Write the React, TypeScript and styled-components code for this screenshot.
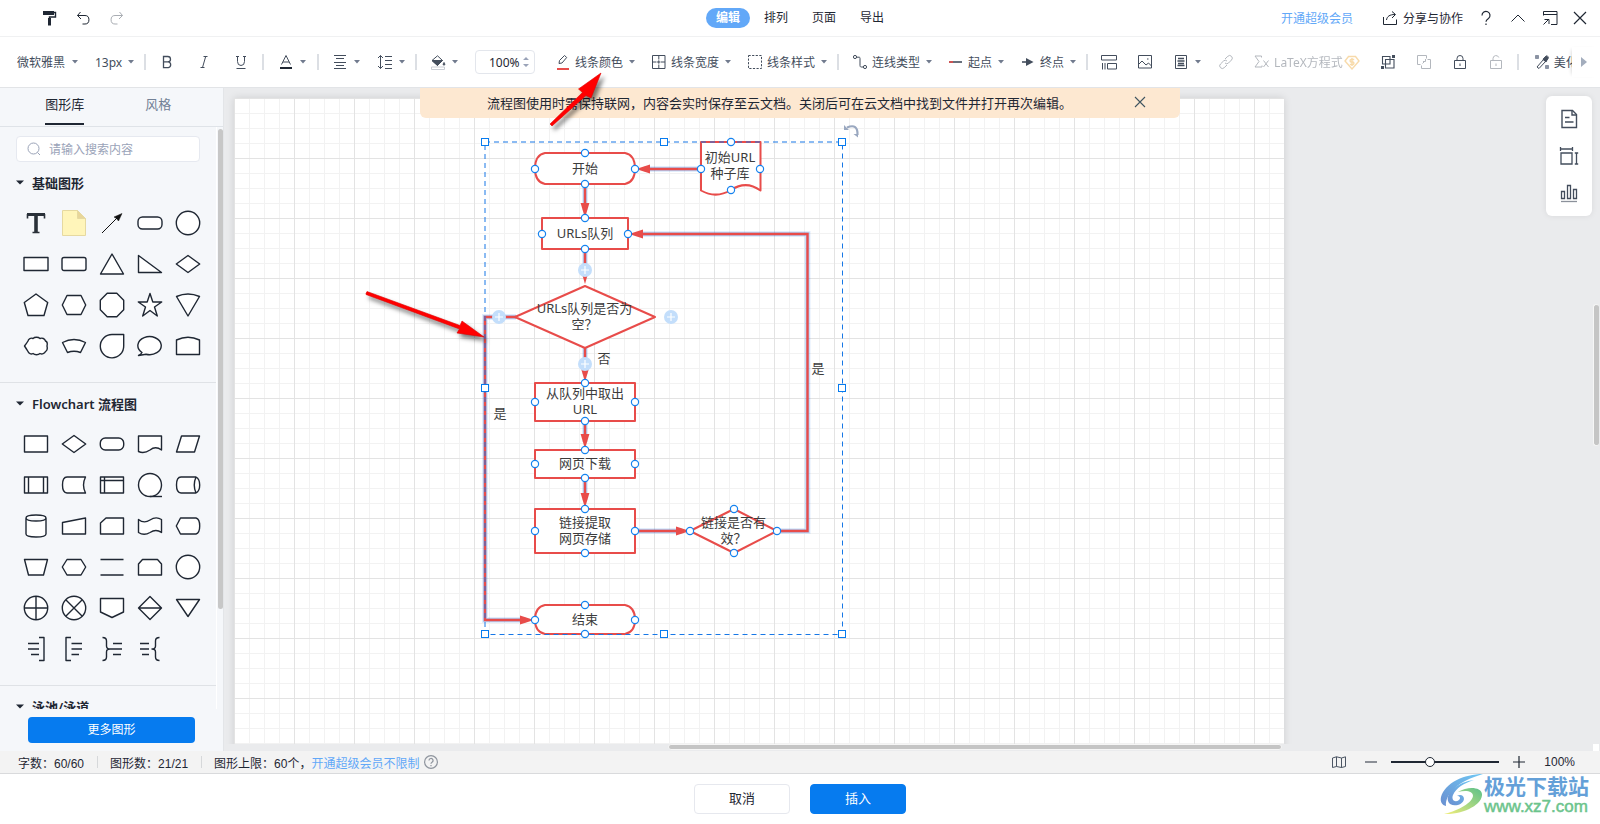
import React from "react";
import styled, { createGlobalStyle, css } from "styled-components";

const UI_FONT = `"Noto Sans", "Noto Sans CJK SC", sans-serif`;
const NUM_FONT = `"Liberation Sans", "Noto Sans CJK SC", sans-serif`;
const INK = "#1f2733";
const TOOL = "#434d5c";
const BLUE = "#067bef";
const RED = "#e84c4a";

const GlobalStyle = createGlobalStyle`
  * { box-sizing: border-box; }
  body { margin: 0; background: #fff; color: ${INK}; font-family: ${UI_FONT}; font-size: 12px; }
  button, input, select { font: inherit; color: inherit; margin: 0; }
  button { background: none; border: 0; padding: 0; cursor: pointer; white-space: nowrap; }
  a { color: #62a8f8; text-decoration: none; }
  svg { display: block; flex: none; }
`;

/* ---------- frame ---------- */

const Shell = styled.div`
  position: relative;
  display: flex;
  flex-direction: column;
  height: 100vh;
  overflow: hidden;
`;

const TopBar = styled.header`
  display: grid;
  grid-template-columns: 1fr auto 1fr;
  align-items: center;
  flex: none;
  height: 37px;
  border-bottom: 1px solid #f0f1f2;
`;

const HistoryTools = styled.div`
  display: flex;
  gap: 14px;
  padding-left: 39px;
`;

const Menu = styled.nav`
  display: flex;
  gap: 4px;
`;

const MenuItem = styled.button<{ $active?: boolean }>`
  width: 44px;
  height: 20px;
  border-radius: 10px;
  line-height: 18px;
  ${(p) =>
    p.$active &&
    css`
      background: #62a8f8;
      color: #fff;
      font-weight: 700;
    `}
`;

const Account = styled.div`
  display: flex;
  align-items: center;
  justify-content: flex-end;
  padding-right: 12px;
  gap: 12px;
`;

const ShareButton = styled.button`
  display: flex;
  align-items: center;
  gap: 5px;
  margin: 0 1px 0 17px;
`;

const IconButton = styled.button<{ $w?: number }>`
  display: flex;
  align-items: center;
  justify-content: center;
  width: ${(p) => p.$w ?? 20}px;
  height: 24px;
`;

/* ---------- tool bar ---------- */

const ToolBar = styled.div`
  display: flex;
  flex: none;
  height: 51px;
  border-bottom: 1px solid #e2e4e7;
  color: ${TOOL};
`;

const ToolStrip = styled.div`
  display: flex;
  align-items: center;
  flex: 1;
  min-width: 0;
  overflow: hidden;
  padding-left: 8px;
`;

const ToolGroup = styled.div<{ $gap?: number; $pad?: number }>`
  display: flex;
  align-items: center;
  flex: none;
  gap: ${(p) => p.$gap ?? 12}px;
  padding: 0 ${(p) => p.$pad ?? 9}px;
`;

const Divider = styled.span`
  flex: none;
  width: 2px;
  height: 16px;
  background: #dcdfe4;
`;

const Tool = styled.button<{ $off?: boolean }>`
  display: flex;
  align-items: center;
  flex: none;
  height: 24px;
  opacity: ${(p) => (p.$off ? 0.4 : 1)};
`;

const ToolIcon = styled.span`
  display: flex;
  align-items: center;
  justify-content: center;
  width: 24px;
`;

const MemberBadge = styled.span`
  margin: 0 4px 0 1px;
`;

const CaretBox = styled.span<{ $gap: number }>`
  display: flex;
  justify-content: center;
  width: 8px;
  margin-left: ${(p) => p.$gap}px;
`;

const Picker = styled.label`
  display: flex;
  align-items: center;
`;

const PickerSelect = styled.select<{ $w: number }>`
  appearance: none;
  width: ${(p) => p.$w}px;
  height: 24px;
  padding: 0;
  border: 0;
  background: none;
  outline: 0;
`;

const ZoomBox = styled.label`
  display: flex;
  align-items: center;
  width: 60px;
  height: 24px;
  margin: 0 5px;
  padding: 0 5px 0 13px;
  border: 1px solid #e3e6ec;
  border-radius: 4px;
  color: ${INK};
`;

const ZoomInput = styled.input`
  flex: 1;
  min-width: 0;
  padding: 0;
  border: 0;
  outline: 0;
`;

const ScrollTools = styled.button`
  display: flex;
  align-items: center;
  justify-content: center;
  flex: none;
  width: 28px;
  margin: 10px 0;
  padding-right: 4px;
  box-shadow: -3px 0 4px -3px rgba(0, 0, 0, 0.2);
`;

/* ---------- main area ---------- */

const Main = styled.main`
  position: relative;
  display: flex;
  flex: 1;
  min-height: 0;
`;

const SideBar = styled.aside`
  display: flex;
  flex-direction: column;
  flex: none;
  width: 224px;
  background: #f5f7fa;
  border-right: 1px solid #e3e5e8;
`;

const Tabs = styled.div`
  display: grid;
  grid-template-columns: 1fr 1fr;
  justify-items: center;
  height: 39px;
  padding: 0 18px;
  border-bottom: 1px solid #dfe3e8;
`;

const Tab = styled.button<{ $active?: boolean }>`
  height: 37px;
  padding-bottom: 5px;
  border-bottom: 2px solid ${(p) => (p.$active ? INK : "transparent")};
  color: ${(p) => (p.$active ? INK : "#728196")};
  font-size: 13px;
`;

const LibraryScroll = styled.div`
  display: flex;
  flex: 1;
  min-height: 0;
`;

const Library = styled.div`
  flex: 1;
  min-width: 0;
  overflow: hidden;
`;

const LibraryTrack = styled.div`
  width: 7px;
  padding: 2px 1px;
  border-left: 1px solid #fff;
`;

const LibraryThumb = styled.div`
  width: 5px;
  height: 83%;
  border-radius: 3px;
  background: #c7c7c7;
`;

const SearchBox = styled.label`
  display: flex;
  align-items: center;
  gap: 8px;
  height: 26px;
  margin: 9px 16px 0;
  padding: 0 10px;
  border: 1px solid #e6e9f0;
  border-radius: 4px;
  background: #fff;
`;

const SearchInput = styled.input`
  flex: 1;
  min-width: 0;
  padding: 0;
  border: 0;
  outline: 0;
  &::placeholder {
    color: #9aa3b8;
  }
`;

const Section = styled.section`
  padding: 10px 0 16px;
  border-bottom: 1px solid #dfe2e6;
`;

const SectionTitle = styled.button`
  display: flex;
  align-items: center;
  gap: 8px;
  height: 20px;
  margin-bottom: 10px;
  padding-left: 16px;
  font-size: 13px;
  font-weight: 600;
`;

const ShapeGrid = styled.div`
  display: grid;
  grid-template-columns: repeat(5, 38px);
  grid-auto-rows: 41px;
  padding-left: 17px;
`;

const ShapeButton = styled.button`
  display: flex;
  align-items: center;
  justify-content: center;
`;

const SideFooter = styled.div`
  padding: 8px 28px;
`;

const MoreButton = styled.button`
  width: 100%;
  height: 26px;
  padding-bottom: 2px;
  border-radius: 4px;
  background: ${BLUE};
  color: #fff;
`;

const Workspace = styled.div`
  position: relative;
  flex: 1;
  min-width: 0;
  padding-bottom: 7px;
  background: #eaebed;
`;

const Viewport = styled.div`
  height: 100%;
  overflow: hidden;
  padding: 10px 0 0 10px;
`;

const Paper = styled.div`
  position: relative;
  width: 1050px;
  height: 900px;
  background-color: #fff;
  background-image: linear-gradient(90deg, #e3e3e3 1px, transparent 1px),
    linear-gradient(#e3e3e3 1px, transparent 1px),
    linear-gradient(90deg, #f2f2f2 1px, transparent 1px),
    linear-gradient(#f2f2f2 1px, transparent 1px);
  background-size: 60px 60px, 60px 60px, 15px 15px, 15px 15px;
  box-shadow: 0 0 8px rgba(0, 0, 0, 0.12);
`;

const DiagramLines = styled.svg`
  position: absolute;
  inset: 0;
`;

const NodeText = styled.div<{ $x: number; $y: number; $w: number; $h: number }>`
  position: absolute;
  left: ${(p) => p.$x}px;
  top: ${(p) => p.$y}px;
  width: ${(p) => p.$w}px;
  height: ${(p) => p.$h}px;
  display: flex;
  align-items: center;
  justify-content: center;
  padding-bottom: 2px;
  text-align: center;
  white-space: pre;
  font-size: 13px;
  line-height: 16px;
  color: #3c3c3c;
`;

const CanvasThumbX = styled.div`
  position: absolute;
  left: 32.3%;
  bottom: 1px;
  width: 44.6%;
  height: 6px;
  border-radius: 3px;
  border: 1px solid #f6f6f6;
  background: #c5c5c5;
`;

const CanvasThumbY = styled.div`
  position: absolute;
  right: 1px;
  top: 216px;
  width: 6px;
  height: 142px;
  border-radius: 3px;
  border: 1px solid #f6f6f6;
  border-right-width: 0;
  background: #c5c5c5;
`;

const ScrollCorner = styled.div`
  position: absolute;
  right: 1px;
  bottom: 0;
  width: 6px;
  height: 7px;
  background: #fff;
`;

const Notice = styled.div`
  position: absolute;
  top: 0;
  left: 50%;
  transform: translateX(-50%);
  display: flex;
  align-items: center;
  justify-content: space-between;
  width: 760px;
  height: 30px;
  padding: 0 30px 2px 67px;
  border-radius: 0 0 6px 6px;
  background: #fde8d1;
  font-size: 13px;
  white-space: nowrap;
`;

const SidePanel = styled.div`
  position: absolute;
  top: 8px;
  right: 8px;
  display: flex;
  flex-direction: column;
  align-items: center;
  gap: 13px;
  width: 46px;
  height: 120px;
  padding-top: 11px;
  border-radius: 6px;
  background: #fff;
  box-shadow: 0 0 6px rgba(0, 0, 0, 0.08);
`;

const Pointer = styled.svg<{ $x: number; $y: number }>`
  position: absolute;
  left: ${(p) => p.$x}px;
  top: ${(p) => p.$y}px;
  pointer-events: none;
  filter: drop-shadow(3px 4px 2px rgba(0, 0, 0, 0.5));
  overflow: visible;
`;

/* ---------- status bar and footer ---------- */

const StatusBar = styled.div`
  display: flex;
  align-items: center;
  flex: none;
  height: 23px;
  padding: 0 25px 0 18px;
  border-bottom: 1px solid #d9dadc;
  background: #f3f3f3;
  font-family: ${NUM_FONT};
`;

const StatusDivider = styled.span`
  width: 1px;
  height: 12px;
  margin: 0 12px 0 13px;
  background: #d6d8da;
`;

const HelpButton = styled.button`
  margin-left: 5px;
`;

const ZoomControls = styled.div`
  display: flex;
  align-items: center;
  margin-left: auto;
  gap: 10px;
`;

const ZoomSlider = styled.input`
  appearance: none;
  width: 108px;
  height: 12px;
  background: linear-gradient(${INK}, ${INK}) center / 100% 2px no-repeat;
  &::-webkit-slider-thumb {
    appearance: none;
    width: 10px;
    height: 10px;
    border: 1px solid ${INK};
    border-radius: 50%;
    background: #fff;
  }
`;

const ZoomValue = styled.span`
  margin-left: 5px;
`;

const Footer = styled.footer`
  position: relative;
  display: flex;
  justify-content: center;
  flex: none;
  gap: 20px;
  padding: 10px 0;
`;

const DialogButton = styled.button<{ $primary?: boolean }>`
  width: 96px;
  height: 30px;
  padding-bottom: 4px;
  border: 1px solid ${(p) => (p.$primary ? BLUE : "#e6e8ee")};
  border-radius: 4px;
  background: ${(p) => (p.$primary ? BLUE : "#fff")};
  color: ${(p) => (p.$primary ? "#fff" : INK)};
  font-size: 13px;
`;

const SiteMark = styled.div`
  position: absolute;
  right: 11px;
  top: 0;
  display: flex;
`;

const SiteName = styled.div`
  display: flex;
  flex-direction: column;
  color: #64a0d8;
  font-size: 21px;
  font-weight: 700;
  line-height: 24px;
`;

const SiteUrl = styled.span`
  color: #6cc48c;
  font-family: "Liberation Sans", sans-serif;
  font-size: 17px;
  font-weight: 400;
  line-height: 18px;
  -webkit-text-stroke: 0.5px #6cc48c;
`;

/* ---------- icons ---------- */

type SvgProps = { w?: number; h?: number; sw?: number; color?: string; children: React.ReactNode };

const Glyph = ({ w = 16, h, sw = 1, color = "currentColor", children }: SvgProps) => (
  <svg width={w} height={h ?? w} viewBox={`0 0 ${w} ${h ?? w}`} fill="none" stroke={color} strokeWidth={sw} aria-hidden="true">
    {children}
  </svg>
);

const Caret = ({ gap = 1 }: { gap?: number }) => (
  <CaretBox $gap={gap}>
    <svg width="6" height="4" viewBox="0 0 6 4" aria-hidden="true">
      <path d="M0 0h6L3 3.4z" fill="#717b8e" />
    </svg>
  </CaretBox>
);

const icons = {
  painter: (
    <Glyph>
      <path d="M2 1h11v4H2z" fill={INK} stroke="none" />
      <path d="M13 2.500h1.500V7H8.500v3" stroke={INK} strokeWidth="1.400" />
      <path d="M7 8h3v7.500H7z" fill={INK} stroke="none" />
    </Glyph>
  ),
  undo: (
    <Glyph>
      <path d="M5.500 2L2.500 5.500L6 9M2.500 5.500H10a3.700 4 0 0 1 0 8.500H7.500" />
    </Glyph>
  ),
  redo: (
    <Glyph color="#a9adb3">
      <path d="M10.500 2l3 3.500L10 9M13.500 5.500H6a3.700 4 0 0 0 0 8.500h2.500" />
    </Glyph>
  ),
  share: (
    <Glyph color={INK}>
      <path d="M1.500 7v7.500h13V9.500M4.500 10C5 6.500 7.500 4.500 13 4.500M10 1.500l3.500 3L10 8" />
    </Glyph>
  ),
  help: (
    <Glyph color={INK} sw={1.2}>
      <path d="M4 5.500a4 4 0 1 1 6.500 3C9 9.500 8 10 8 11.800" />
      <path d="M8 13.500v1.500" />
    </Glyph>
  ),
  up: (
    <Glyph color={INK}>
      <path d="M1.500 11.500L8 5l6.500 6.500" />
    </Glyph>
  ),
  popout: (
    <Glyph color={INK}>
      <path d="M1.500 5.500V1.500h13.500v13H9M1.500 4.500h13.500M1.500 14.500l5-5M2.500 9.500h4.500v4.500" />
    </Glyph>
  ),
  close: (
    <Glyph color={INK} sw={1.2}>
      <path d="M2 2l12 12M14 2L2 14" />
    </Glyph>
  ),
  bold: (
    <Glyph sw={1.3}>
      <path d="M4.500 2.500h4.200a2.800 2.700 0 0 1 0 5.400H4.500zM4.500 7.900h4.900a2.800 2.900 0 0 1 0 5.700H4.500z" />
    </Glyph>
  ),
  italic: (
    <Glyph>
      <path d="M7.500 2.500h4M4.500 13.500h4M9.700 2.500L6.500 13.500" />
    </Glyph>
  ),
  underline: (
    <Glyph>
      <path d="M4.500 2v5.500a3.500 4 0 0 0 7 0V2M3 2.500h3M10 2.500h3M3.500 14.500h9" />
    </Glyph>
  ),
  fontColor: (
    <Glyph>
      <path d="M3.500 10.500L8 1.500l4.500 9M5 8h6" />
      <path d="M2 14h12" stroke={INK} strokeWidth="2" />
    </Glyph>
  ),
  align: (
    <Glyph>
      <path d="M2 1.500h12M4 4.500h8M2 8.500h12M4 11.500h8M2 14.500h12" />
    </Glyph>
  ),
  lineHeight: (
    <Glyph>
      <path d="M3.500 1.500v13M1 4l2.500-2.500L6 4M1 12l2.500 2.500L6 12M8 2.500h7M8 6.500h7M8 10.500h7M8 14.500h7" />
    </Glyph>
  ),
  fill: (
    <Glyph>
      <path d="M2 6.500L7.500 1.800l5 4.700-5 5z" />
      <path d="M2 6.500h10.500l-5 5zM14 8.500c1 1.500 1.200 2.500 0 2.700-1.200-.2-1-1.200 0-2.700z" fill="currentColor" />
      <path d="M1.500 13h13v2.500h-13z" stroke="#c9cdd4" strokeWidth="1" />
    </Glyph>
  ),
  lineColor: (
    <Glyph>
      <path d="M4 9.500l.5-3L9.500 1.500l2.200 2L7 9z" />
      <path d="M2 15h12" stroke={RED} strokeWidth="2" />
    </Glyph>
  ),
  lineWidth: (
    <Glyph>
      <path d="M1.500 1.500h12.500v13H1.500z" />
      <path d="M1.500 8h4M10 8h4M7.800 1.500v4M7.800 10.500v4" />
      <path d="M6 8h3.500M7.800 6.300v3.400" />
    </Glyph>
  ),
  lineStyle: (
    <Glyph>
      <path d="M1.500 1.500h13v13h-13z" strokeDasharray="2.200 1.400" />
    </Glyph>
  ),
  connector: (
    <Glyph>
      <circle cx="3" cy="3" r="1.600" />
      <circle cx="13" cy="13" r="1.600" />
      <path d="M4.600 3.200H7c1 0 1 .5 1 1.500v6.500c0 1 .2 1.800 1.200 1.800h2.200" />
    </Glyph>
  ),
  lineStart: (
    <Glyph>
      <path d="M1 8h13" strokeWidth="1.600" />
      <path d="M1 8h4" stroke={RED} strokeWidth="1.600" />
    </Glyph>
  ),
  lineEnd: (
    <Glyph>
      <path d="M2 8h5" strokeWidth="1.600" />
      <path d="M6 4l7.500 4L6 12z" fill="currentColor" stroke="none" />
    </Glyph>
  ),
  layout: (
    <Glyph>
      <path d="M.5 1.500h15v4.500H.5zM6.500 9.500h9v5.500H6.500zM1.500 9v6.500M4 9v6.500" />
    </Glyph>
  ),
  image: (
    <Glyph>
      <path d="M1.500 1.500h13v12.500h-13z" />
      <path d="M1.500 10.500l3.500-3.500 4 4 2.500-2 3 3M10 5h1.500" />
    </Glyph>
  ),
  document: (
    <Glyph>
      <path d="M2.500 1.500h11v13h-11z" />
      <path d="M5 4.500h6M4.500 7h7M5 9.500h6M4.500 11.500h7" strokeWidth="1.400" />
    </Glyph>
  ),
  link: (
    <Glyph>
      <path d="M7 5l2.800-2.700a2.500 2.500 0 0 1 3.700 3.700L10.500 9a2.500 2.500 0 0 1-3.500 0M9 11l-2.800 2.700a2.500 2.500 0 0 1-3.700-3.700L5.500 7A2.500 2.500 0 0 1 9 7" />
    </Glyph>
  ),
  sigma: (
    <Glyph>
      <path d="M7.500 3.500V2H1l4 5.500L1 13h7v-1.500M9.500 6.500l5 6.500M14.500 6.500l-5 6.500" />
    </Glyph>
  ),
  coin: (
    <Glyph sw={1.4} color="#eda52c">
      <path d="M4.500 2.500h7L15 7 8 15 1 7z" />
      <path d="M10.200 5.500H7a1.300 1.300 0 0 0 0 2.500h2a1.300 1.300 0 0 1 0 2.500H5.800M8 4v8" />
    </Glyph>
  ),
  group: (
    <Glyph sw={1.1}>
      <path d="M2.500 2.500h7.500v7.500H2.500zM5.500 5.500h8.500v8.500H5.500z" />
      <path d="M12 1h3v3h-3zM1 12h3v3H1z" fill="currentColor" stroke="none" />
    </Glyph>
  ),
  ungroup: (
    <Glyph>
      <path d="M4.500 10.500H1.500V1.500h9v3M11.500 5.500h3v9H5.500v-3M6.500 9.500l3-3M9.500 5v2.500H7" />
    </Glyph>
  ),
  lock: (
    <Glyph>
      <path d="M2.500 6.500h11v8h-11zM5 6.500V4.500a3 3 0 0 1 6 0v2M8 9.500v2.500" />
    </Glyph>
  ),
  unlock: (
    <Glyph>
      <path d="M2.500 6.500h11v8h-11zM5 6.500V4.500a3 3 0 0 1 5.800-1M8 9.500v2.500" />
    </Glyph>
  ),
  beautify: (
    <Glyph>
      <path d="M3 13L9.500 5.500l2 2L5 14.500zM9.500 5l2-2.500a1.600 1.600 0 0 1 2.500 2L12 7z" />
      <path d="M9 5.500l3 2.500 2-4-2-1.800z" fill="currentColor" />
      <path d="M1.500 1.500h3v3h-3zM11.500 11.500h3v3h-3z" fill="#8b93a3" stroke="#8b93a3" />
    </Glyph>
  ),
  search: (
    <Glyph w={14} color="#9aa3b8">
      <circle cx="6.500" cy="6.500" r="5.500" />
      <path d="M10.500 10.500l2.500 2.500" />
    </Glyph>
  ),
  page: (
    <Glyph w={20} sw={1.4} color={TOOL}>
      <path d="M3 1.500h10.500L17.500 5.500v13H3z" />
      <path d="M13 1.500v4.500h4.500" />
      <path d="M6 8.500h4.500M6 13h8.500" />
    </Glyph>
  ),
  measure: (
    <Glyph w={20} sw={1.3} color={TOOL}>
      <path d="M2 7h11v11H2zM1.500 3h12M1.500 1v4M13.500 1v4M17.500 7v11M15.800 7h3.400M15.800 18h3.400" />
    </Glyph>
  ),
  chart: (
    <Glyph w={20} sw={1.3} color={TOOL}>
      <path d="M2.500 8.500h3v7h-3zM8.500 2.500h3v13h-3zM14.500 6.500h3v9h-3z" />
      <path d="M2 18.500h16" stroke="#8b919b" />
    </Glyph>
  ),
  map: (
    <Glyph w={14} h={12} color="#4b5563">
      <path d="M.5 2L4.500.800v9.700L.500 11.500zM4.500.800l5 1.200v9.500l-5-1M9.500 2l4-1.200v9.700l-4 1z" />
    </Glyph>
  ),
  minus: (
    <Glyph w={14} color="#8b8f96" sw={2}>
      <path d="M1 7h12" />
    </Glyph>
  ),
  plus: (
    <Glyph w={14} color={INK} sw={1.2}>
      <path d="M1 7h12M7 1v12" />
    </Glyph>
  ),
  question: (
    <Glyph w={14} color="#8f959e" sw={1.2}>
      <circle cx="7" cy="7" r="6.400" />
      <path d="M5 5.500a2 2 0 1 1 3 1.700c-.7.400-1 .800-1 1.500M7 10v1.200" />
    </Glyph>
  ),
};

/* ---------- shape library ---------- */

type Shape = { name: string; body: React.ReactNode };
const p = (name: string, d: string): Shape => ({ name, body: <path d={d} /> });

const basicShapes: Shape[] = [
  { name: "文本", body: <g fill="none" stroke="#2a3139"><path d="M4 4.500h18" strokeWidth="3" /><path d="M13 4v18" strokeWidth="3.600" /><path d="M9.500 22.500h7M4.500 4v4.500M21.500 4v4.500" strokeWidth="1.600" /></g> },
  { name: "便签", body: <g stroke="#e6d9a0" strokeWidth="1"><path d="M1.500 .5H16.500L24.500 8.500V25.500H1.500z" fill="#fff5ba" /><path d="M16.500 .5V8.500H24.500z" fill="#e8d69a" /></g> },
  { name: "箭头", body: <g stroke="#111" strokeWidth="1"><path d="M3 23L18 8" /><path d="M23 3.500L19.500 11l-2-2.500L15 7z" fill="#111" strokeWidth=".5" /></g> },
  { name: "圆角胶囊", body: <rect x="1" y="7" width="24" height="12" rx="4.500" /> },
  { name: "圆", body: <circle cx="13" cy="13" r="11.700" /> },
  { name: "矩形", body: <rect x="1" y="6.500" width="24" height="13" /> },
  { name: "圆角矩形", body: <rect x="1" y="6.500" width="24" height="13" rx="2" /> },
  p("三角形", "M13 3L24.500 23H1.500z"),
  p("直角三角形", "M1.500 4.500V21.500H24.500z"),
  p("菱形", "M13 4.500L24.700 13L13 21.500L1.300 13z"),
  p("五边形", "M13 2L24.700 10.500L21 23.500H5L1.300 10.500z"),
  p("六边形", "M6 3.500H20L24.700 13L20 22.500H6L1.300 13z"),
  p("八边形", "M8.200 1.300H17.800L24.700 8.200V17.800L17.800 24.700H8.200L1.300 17.800V8.200z"),
  p("五角星", "M13 1.500L15.800 10H24.700L17.500 15L20.300 24L13 18.500L5.700 24L8.500 15L1.300 10H10.200z"),
  p("扇形", "M1.500 4.500Q13-.5 24.500 4.500L13 24z"),
  p("云", "M5 8A3.500 3.500 0 0 1 10 5.500A4.500 3.500 0 0 1 17 5.500A4 4 0 0 1 22.500 8Q25 9 24 13Q25 17 22.500 18.500A4 4 0 0 1 17 20.500A4.500 3.500 0 0 1 10 20.500A3.500 3.500 0 0 1 5 18.500Q3.500 16 1.500 13Q3.500 10.500 5 8z"),
  p("弧形", "M1.500 9.500Q13 3.500 24.500 9.500L19.500 19.500Q13 17 6.500 19.500z"),
  p("水滴", "M13 1.500H24.700V13A11.700 11.700 0 1 1 13 1.500z"),
  p("对话", "M5 19.500A11.700 9 0 1 1 9 21.200L1.500 22.500Q4 21.500 5 19.500z"),
  p("拱形", "M1.500 21.500V7Q13 1.500 24.500 7V21.500z"),
];

const flowShapes: Shape[] = [
  p("流程", "M1.500 5H24.500V21H1.500z"),
  p("判定", "M13 4.500L24.700 13L13 21.500L1.300 13z"),
  { name: "开始结束", body: <rect x="1.300" y="7" width="23.400" height="12" rx="5" /> },
  p("文档", "M1.500 5H24.500V19Q18.500 14.500 13 19Q7 23 1.500 20.500z"),
  p("数据", "M6.500 5H24.500L19.500 21H1.500z"),
  p("子流程", "M1.500 5H24.500V21H1.500zM5.500 5V21M20.500 5V21"),
  p("外部数据", "M6 5H24.500Q20.500 13 24.500 21H6Q1.500 21 1.500 13Q1.500 5 6 5z"),
  p("内部存储", "M1.500 5H24.500V21H1.500zM5.500 5V21M1.500 8.500H24.500"),
  { name: "队列数据", body: <><circle cx="13" cy="13" r="11.500" /><path d="M13 24.500H25" /></> },
  p("条件", "M6 5H21Q24.700 7 24.700 13Q24.700 19 21 21H6Q1.500 21 1.500 13Q1.500 5 6 5zM21 5Q17.500 13 21 21"),
  p("数据库", "M3 5Q3 2 13 2T23 5V21Q23 24 13 24T3 21zM3 5Q3 8 13 8T23 5"),
  p("人工输入", "M1.500 9.500L24.500 5V21H1.500z"),
  p("卡片", "M7 5H24.500V21H1.500V10z"),
  p("条带", "M1.500 6.500Q7 11 13 7Q19 3 24.500 6.500V19.500Q19 15.500 13 19.500Q7 23 1.500 19.500z"),
  p("展示", "M5.500 5H21Q24.700 6 24.700 13Q24.700 20 21 21H5.500L1.300 13z"),
  p("人工操作", "M1.500 5.500H24.500L20.500 21H5.500z"),
  p("准备", "M6 5.500H20L24.700 13L20 21H6L1.300 13z"),
  p("并行模式", "M1.500 5.500H24.500M1.500 21H24.500"),
  p("循环限值", "M5.500 5.500H20.500L24.500 10V21H1.500V10z"),
  { name: "页面内引用", body: <circle cx="13" cy="13" r="11.700" /> },
  { name: "或者", body: <><circle cx="13" cy="13" r="11.700" /><path d="M1.300 13H24.700M13 1.300V24.700" /></> },
  { name: "总和", body: <><circle cx="13" cy="13" r="11.700" /><path d="M5 5L21 21M21 5L5 21" /></> },
  p("跨页引用", "M1.500 3.500H24.500V17L13 22.500L1.500 17z"),
  p("排序", "M13 1.500L24.500 13L13 24.500L1.500 13zM1.500 13H24.500"),
  p("合并", "M1.500 4.500H24.500L13 21.500z"),
  { name: "右注释", body: <path fill="none" d="M16 1.500H21V24.500H16M5 7.500H16M5 13H16M8 18.500H16" /> },
  { name: "左注释", body: <path fill="none" d="M10 1.500H5V24.500H10M10.500 7.500H21M10.500 13H21M10.500 18.500H18" /> },
  { name: "右括注释", body: <path fill="none" d="M3.500 1.500Q7.500 1.500 7.500 5V10Q7.500 13 11 13Q7.500 13 7.500 16V21Q7.500 24.500 3.500 24.500M14 7.500H23M11 13H23M14 18.500H22" /> },
  { name: "左括注释", body: <path fill="none" d="M22.500 1.500Q18.500 1.500 18.500 5V10Q18.500 13 15 13Q18.500 13 18.500 16V21Q18.500 24.500 22.500 24.500M3 7.500H12M3 13H12M5 18.500H12" /> },
];

const ShapeSection = ({ title, shapes }: { title: string; shapes: Shape[] }) => (
  <Section>
    <SectionTitle>
      <svg width="8" height="5" viewBox="0 0 8 5" aria-hidden="true">
        <path d="M0 .5h8L4 4.500z" fill={INK} />
      </svg>
      {title}
    </SectionTitle>
    <ShapeGrid>
      {shapes.map((s) => (
        <ShapeButton key={s.name} aria-label={s.name}>
          <svg width="26" height="26" viewBox="0 0 26 26" fill="#fff" stroke={INK} strokeWidth="1.400" strokeLinejoin="round">
            {s.body}
          </svg>
        </ShapeButton>
      ))}
    </ShapeGrid>
  </Section>
);

/* ---------- diagram ---------- */

const connectors = [
  "M467 71H410",
  "M351 86V112",
  "M351 151V176",
  "M351 250V276",
  "M351 323V344",
  "M351 380V402",
  "M401 433H448",
  "M543 433H573.500V136H404",
  "M282 219H251V522H292",
];

const arrowHeads = [
  "M402 71l14-4.400v8.800z",
  "M351 120l-4.400-15h8.800z",
  "M351 186l-4.400-15h8.800z",
  "M351 284l-4.400-15h8.800z",
  "M351 351l-4.400-15h8.800z",
  "M351 410l-4.400-15h8.800z",
  "M456 433l-14-4.400v8.800z",
  "M395 136l14-4.400v8.800z",
  "M300 522l-14-4.400v8.800z",
];

const outlines = [
  "M311 55H391Q401 57 401 70.500Q401 84 391 86H311Q301 84 301 70.500Q301 57 311 55z",
  "M467 44H526.500V92.500Q512 82 497 92Q482 101 467 92.500z",
  "M308 120H394V151H308z",
  "M351 188L421 219L351 250L281 219z",
  "M301 285H401V323H301z",
  "M301 352H401V380H301z",
  "M301 411H401V455H301z",
  "M500 411L543 433L500 455L456 433z",
  "M311 507H391Q401 509 401 521.500Q401 534 391 536H311Q301 534 301 521.500Q301 509 311 507z",
];

const ports: [number, number][] = [
  [351, 55], [351, 86], [301, 71], [401, 71],
  [497, 44], [467, 71], [526, 71], [497, 92],
  [351, 120], [351, 151], [308, 136], [394, 136],
  [351, 285], [351, 323], [301, 304], [401, 304],
  [351, 352], [351, 380], [301, 366], [401, 366],
  [351, 411], [351, 455], [301, 433], [401, 433],
  [500, 411], [500, 455], [456, 433], [543, 433],
  [351, 507], [351, 536], [301, 522], [401, 522],
];

const handles: [number, number][] = [
  [251, 44], [430, 44], [608, 44], [251, 290], [608, 290], [251, 536], [430, 536], [608, 536],
];

const addPoints: [number, number][] = [[351, 172], [265, 219], [437, 219], [351, 266]];

const labels = [
  { t: "开始", x: 301, y: 55, w: 100, h: 31 },
  { t: "初始URL\n种子库", x: 466, y: 44, w: 60, h: 48 },
  { t: "URLs队列", x: 308, y: 120, w: 86, h: 31 },
  { t: "URLs队列是否为\n空？", x: 281, y: 188, w: 139, h: 62 },
  { t: "否", x: 360, y: 253, w: 20, h: 16 },
  { t: "从队列中取出\nURL", x: 301, y: 285, w: 100, h: 38 },
  { t: "是", x: 256, y: 308, w: 20, h: 16 },
  { t: "是", x: 574, y: 263, w: 20, h: 16 },
  { t: "网页下载", x: 301, y: 352, w: 100, h: 28 },
  { t: "链接提取\n网页存储", x: 301, y: 411, w: 100, h: 44 },
  { t: "链接是否有\n效？", x: 456, y: 411, w: 87, h: 44 },
  { t: "结束", x: 301, y: 507, w: 100, h: 29 },
];

const Diagram = () => (
  <Paper>
    <DiagramLines width="1050" height="900" viewBox="0 0 1050 900" fill="none" aria-hidden="true">
      {connectors.map((d) => (
        <g key={d}>
          <path d={d} stroke="rgba(6,110,230,.12)" strokeWidth="6" />
          <path d={d} stroke="rgba(6,110,230,.22)" strokeWidth="4" />
          <path d={d} stroke={RED} strokeWidth="2.400" />
        </g>
      ))}
      {arrowHeads.map((d) => (
        <path key={d} d={d} fill={RED} />
      ))}
      {outlines.map((d) => (
        <path key={d} d={d} fill="#fff" stroke={RED} strokeWidth="2" strokeLinejoin="round" />
      ))}
    </DiagramLines>
    {labels.map((l) => (
      <NodeText key={`${l.t}${l.x}`} $x={l.x} $y={l.y} $w={l.w} $h={l.h}>
        {l.t}
      </NodeText>
    ))}
    <DiagramLines width="1050" height="900" viewBox="0 0 1050 900" fill="none" aria-hidden="true">
      <path d="M251 44H608.500V536.500H251z" stroke="#1677e6" strokeDasharray="5 4" />
      {ports.map(([x, y]) => (
        <circle key={`${x}-${y}`} cx={x} cy={y} r="3.600" fill="#fff" stroke="#1683ef" strokeWidth="1.200" />
      ))}
      {handles.map(([x, y]) => (
        <rect key={`${x}-${y}`} x={x - 3.5} y={y - 3.5} width="7" height="7" fill="#fff" stroke={BLUE} />
      ))}
      {addPoints.map(([x, y]) => (
        <g key={`${x}-${y}`}>
          <circle cx={x} cy={y} r="7" fill="#c3defb" />
          <path d={`M${x - 4} ${y}h8M${x} ${y - 4}v8`} stroke="#fff" strokeWidth="1.200" />
        </g>
      ))}
      <path d="M613 29.500Q624 25 623.500 37" stroke="#9aa8c0" strokeWidth="2.200" />
      <path d="M610 27v5h5zM619.500 36h4.500v3.500z" fill="#9aa8c0" />
    </DiagramLines>
  </Paper>
);

/* ---------- tool helpers ---------- */

type ToolProps = { icon: React.ReactNode; label: string; text?: string; menu?: boolean; off?: boolean; after?: React.ReactNode };

const ToolButton = ({ icon, label, text, menu, off, after }: ToolProps) => (
  <Tool aria-label={label} $off={off}>
    <ToolIcon>{icon}</ToolIcon>
    {text}
    {after && <MemberBadge>{after}</MemberBadge>}
    {menu && <Caret gap={text ? 5 : 1} />}
  </Tool>
);

export default function App() {
  return (
    <Shell>
      <GlobalStyle />
      <TopBar>
        <HistoryTools>
          <IconButton aria-label="格式刷">{icons.painter}</IconButton>
          <IconButton aria-label="撤销">{icons.undo}</IconButton>
          <IconButton aria-label="重做">{icons.redo}</IconButton>
        </HistoryTools>
        <Menu>
          <MenuItem $active>编辑</MenuItem>
          <MenuItem>排列</MenuItem>
          <MenuItem>页面</MenuItem>
          <MenuItem>导出</MenuItem>
        </Menu>
        <Account>
          <a href="#vip">开通超级会员</a>
          <ShareButton>
            {icons.share}
            分享与协作
          </ShareButton>
          <IconButton aria-label="帮助">{icons.help}</IconButton>
          <IconButton aria-label="收起">{icons.up}</IconButton>
          <IconButton aria-label="还原窗口">{icons.popout}</IconButton>
          <IconButton $w={16} aria-label="关闭">{icons.close}</IconButton>
        </Account>
      </TopBar>

      <ToolBar>
        <ToolStrip>
          <ToolGroup $gap={16}>
            <Picker>
              <PickerSelect $w={48} aria-label="字体">
                <option>微软雅黑</option>
              </PickerSelect>
              <Caret gap={6} />
            </Picker>
            <Picker>
              <PickerSelect $w={28} aria-label="字号">
                <option>13px</option>
              </PickerSelect>
              <Caret gap={4} />
            </Picker>
          </ToolGroup>
          <Divider />
          <ToolGroup $gap={13}>
            <ToolButton icon={icons.bold} label="加粗" />
            <ToolButton icon={icons.italic} label="斜体" />
            <ToolButton icon={icons.underline} label="下划线" />
          </ToolGroup>
          <Divider />
          <ToolGroup $pad={10}>
            <ToolButton icon={icons.fontColor} label="字体颜色" menu />
          </ToolGroup>
          <Divider />
          <ToolGroup>
            <ToolButton icon={icons.align} label="对齐" menu />
            <ToolButton icon={icons.lineHeight} label="行高" menu />
          </ToolGroup>
          <Divider />
          <ToolGroup $gap={11}>
            <ToolButton icon={icons.fill} label="填充" menu />
            <ZoomBox>
              <ZoomInput defaultValue="100%" aria-label="不透明度" />
              <svg width="6" height="12" viewBox="0 0 6 12" aria-hidden="true">
                <path d="M0 4L3 1l3 3zM0 8h6l-3 3z" fill="#9aa3b8" />
              </svg>
            </ZoomBox>
            <ToolButton icon={icons.lineColor} label="线条颜色" text="线条颜色" menu />
            <ToolButton icon={icons.lineWidth} label="线条宽度" text="线条宽度" menu />
            <ToolButton icon={icons.lineStyle} label="线条样式" text="线条样式" menu />
          </ToolGroup>
          <Divider />
          <ToolGroup $gap={11}>
            <ToolButton icon={icons.connector} label="连线类型" text="连线类型" menu />
            <ToolButton icon={icons.lineStart} label="起点" text="起点" menu />
            <ToolButton icon={icons.lineEnd} label="终点" text="终点" menu />
          </ToolGroup>
          <Divider />
          <ToolGroup>
            <ToolButton icon={icons.layout} label="布局" />
            <ToolButton icon={icons.image} label="图片" />
            <ToolButton icon={icons.document} label="文档" menu />
            <ToolButton icon={icons.link} label="链接" off />
            <ToolButton icon={icons.sigma} label="LaTeX方程式" text="LaTeX方程式" off after={icons.coin} />
            <ToolButton icon={icons.group} label="组合" />
            <ToolButton icon={icons.ungroup} label="取消组合" off />
            <ToolButton icon={icons.lock} label="锁定" />
            <ToolButton icon={icons.unlock} label="解锁" off />
          </ToolGroup>
          <Divider />
          <ToolGroup $pad={11}>
            <ToolButton icon={icons.beautify} label="美化" text="美化" />
          </ToolGroup>
        </ToolStrip>
        <ScrollTools aria-label="更多工具">
          <svg width="6" height="10" viewBox="0 0 6 10" aria-hidden="true">
            <path d="M0 0v10l6-5z" fill="#a3adbd" />
          </svg>
        </ScrollTools>
      </ToolBar>

      <Main>
        <SideBar>
          <Tabs>
            <Tab $active>图形库</Tab>
            <Tab>风格</Tab>
          </Tabs>
          <LibraryScroll>
            <Library>
              <SearchBox>
                {icons.search}
                <SearchInput placeholder="请输入搜索内容" aria-label="搜索图形" />
              </SearchBox>
              <ShapeSection title="基础图形" shapes={basicShapes} />
              <ShapeSection title="Flowchart 流程图" shapes={flowShapes} />
              <ShapeSection title="泳池/泳道" shapes={[]} />
            </Library>
            <LibraryTrack>
              <LibraryThumb />
            </LibraryTrack>
          </LibraryScroll>
          <SideFooter>
            <MoreButton>更多图形</MoreButton>
          </SideFooter>
        </SideBar>
        <Workspace>
          <Viewport>
            <Diagram />
          </Viewport>
          <CanvasThumbX />
          <CanvasThumbY />
          <ScrollCorner />
          <SidePanel>
            <IconButton aria-label="页面设置">{icons.page}</IconButton>
            <IconButton aria-label="尺寸">{icons.measure}</IconButton>
            <IconButton aria-label="数据">{icons.chart}</IconButton>
          </SidePanel>
          <Pointer $x={142} $y={204} width="118" height="46" viewBox="0 0 118 46" aria-hidden="true">
            <path d="M0 1.500L1-.5L94 33.500L96 29L118 45L91 41L93.500 37L0 2.500z" fill="#f00" stroke="#d00" strokeWidth=".6" />
          </Pointer>
        </Workspace>
        <Notice>
          流程图使用时需保持联网，内容会实时保存至云文档。关闭后可在云文档中找到文件并打开再次编辑。
          <IconButton aria-label="关闭提示">
            <Glyph w={12} sw={1.1} color="#3f5560">
              <path d="M1 1l10 10M11 1L1 11" />
            </Glyph>
          </IconButton>
        </Notice>
      </Main>

      <StatusBar>
        <span>字数：60/60</span>
        <StatusDivider />
        <span>图形数：21/21</span>
        <StatusDivider />
        <span>
          图形上限：60个，<a href="#limit">开通超级会员不限制</a>
        </span>
        <HelpButton aria-label="图形上限说明">{icons.question}</HelpButton>
        <ZoomControls>
          <IconButton $w={24} aria-label="导航图">{icons.map}</IconButton>
          <IconButton aria-label="缩小">{icons.minus}</IconButton>
          <ZoomSlider type="range" min="0" max="100" defaultValue="34" aria-label="缩放" />
          <IconButton aria-label="放大">{icons.plus}</IconButton>
          <ZoomValue>100%</ZoomValue>
        </ZoomControls>
      </StatusBar>

      <Footer>
        <DialogButton>取消</DialogButton>
        <DialogButton $primary>插入</DialogButton>
        <SiteMark>
          <svg width="44" height="41" viewBox="0 0 44 41" aria-hidden="true">
            <defs>
              <linearGradient id="markBlue" x1="0" y1="1" x2="1" y2="0">
                <stop offset="0" stopColor="#6a8fd0" />
                <stop offset="1" stopColor="#6fc8f5" />
              </linearGradient>
              <linearGradient id="markGreen" x1="0" y1="1" x2="1" y2="0">
                <stop offset="0" stopColor="#f3ee7a" />
                <stop offset="1" stopColor="#5cc08a" />
              </linearGradient>
            </defs>
            <path d="M43 0C24 0 5 9 1 23C0 28 2 31 6 32C5 20 18 7 43 0z" fill="url(#markBlue)" />
            <path d="M34 6C18 8 6 18 8 27C10 34 23 32 24 25C24 21 20 20 17 22C20 22 21 24 19 26C15 29 11 26 13 21C16 14 24 9 34 6z" fill="url(#markBlue)" />
            <path d="M18 18C28 12 41 13 42 20C43 30 24 41 4 40C14 38 32 30 33 22C33 17 26 16 18 18z" fill="url(#markGreen)" />
          </svg>
          <SiteName>
            极光下载站
            <SiteUrl>www.xz7.com</SiteUrl>
          </SiteName>
        </SiteMark>
      </Footer>

      <Pointer $x={550} $y={72} width="52" height="55" viewBox="0 0 52 55" aria-hidden="true">
        <path d="M0 52L32.500 20.500L28.500 17L51 1L41 26L36 23.500L2 54z" fill="#f00" stroke="#d00" strokeWidth=".6" />
      </Pointer>
    </Shell>
  );
}
